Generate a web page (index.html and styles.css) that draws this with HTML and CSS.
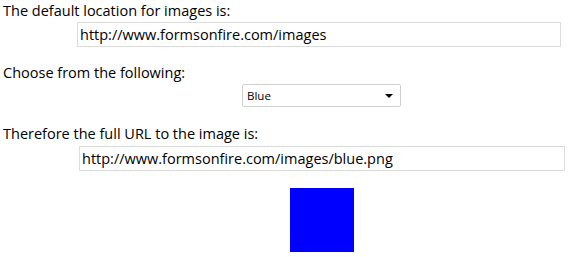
FILE: index.html
```html
<!DOCTYPE html>
<html>
<head>
<meta charset="utf-8">
<link rel="stylesheet" href="styles.css">
</head>
<body>
<div class="form">
  <div class="label">The default location for images is:</div>
  <div class="field f1"><input class="text" type="text" value="http://www.formsonfire.com/images"></div>
  <div class="label l2">Choose from the following:</div>
  <div class="field f2">
    <div class="select"><span>Blue</span><span class="arrow"></span></div>
  </div>
  <div class="label l3">Therefore the full URL to the image is:</div>
  <div class="field f3"><input class="text wide" type="text" value="http://www.formsonfire.com/images/blue.png"></div>
  <div class="field f4"><div class="swatch"></div></div>
</div>
</body>
</html>
```
FILE: styles.css
```css
html, body { margin: 0; padding: 0; background: #fff; }
body { font-family: "Open Sans", "Noto Sans", sans-serif; color: #000; }
.form { padding: 1px 0 0 3px; }
.label { font-size: 14.5px; line-height: 20px; height: 20px; }
.field { display: flex; }
.f1 { margin-top: 1px; padding-left: 74px; }
.text {
  box-sizing: border-box;
  width: 484px; height: 25px;
  border: 1px solid #dcdcdc;
  padding: 0 2px;
  font-family: "Open Sans", "Noto Sans", sans-serif;
  font-size: 14.5px;
  color: #000;
  outline: none;
  margin: 0;
}
.wide { width: 486px; }
.l2 { margin-top: 16px; }
.f2 { padding-left: 239px; margin-top: 1px; }
.select {
  box-sizing: border-box;
  width: 159px; height: 23px;
  border: 1px solid #d0d0d0;
  border-radius: 2px;
  display: flex; align-items: center; justify-content: space-between;
  padding: 0 7px 0 4px;
  font-size: 11.5px;
}
.arrow {
  width: 0; height: 0;
  border-left: 4px solid transparent;
  border-right: 4px solid transparent;
  border-top: 4px solid #000;
}
.l3 { margin-top: 17px; }
.f3 { margin-top: 2px; padding-left: 76px; }
.f4 { margin-top: 17px; padding-left: 287px; }
.swatch { width: 64px; height: 64px; background: #0000ff; }
```
